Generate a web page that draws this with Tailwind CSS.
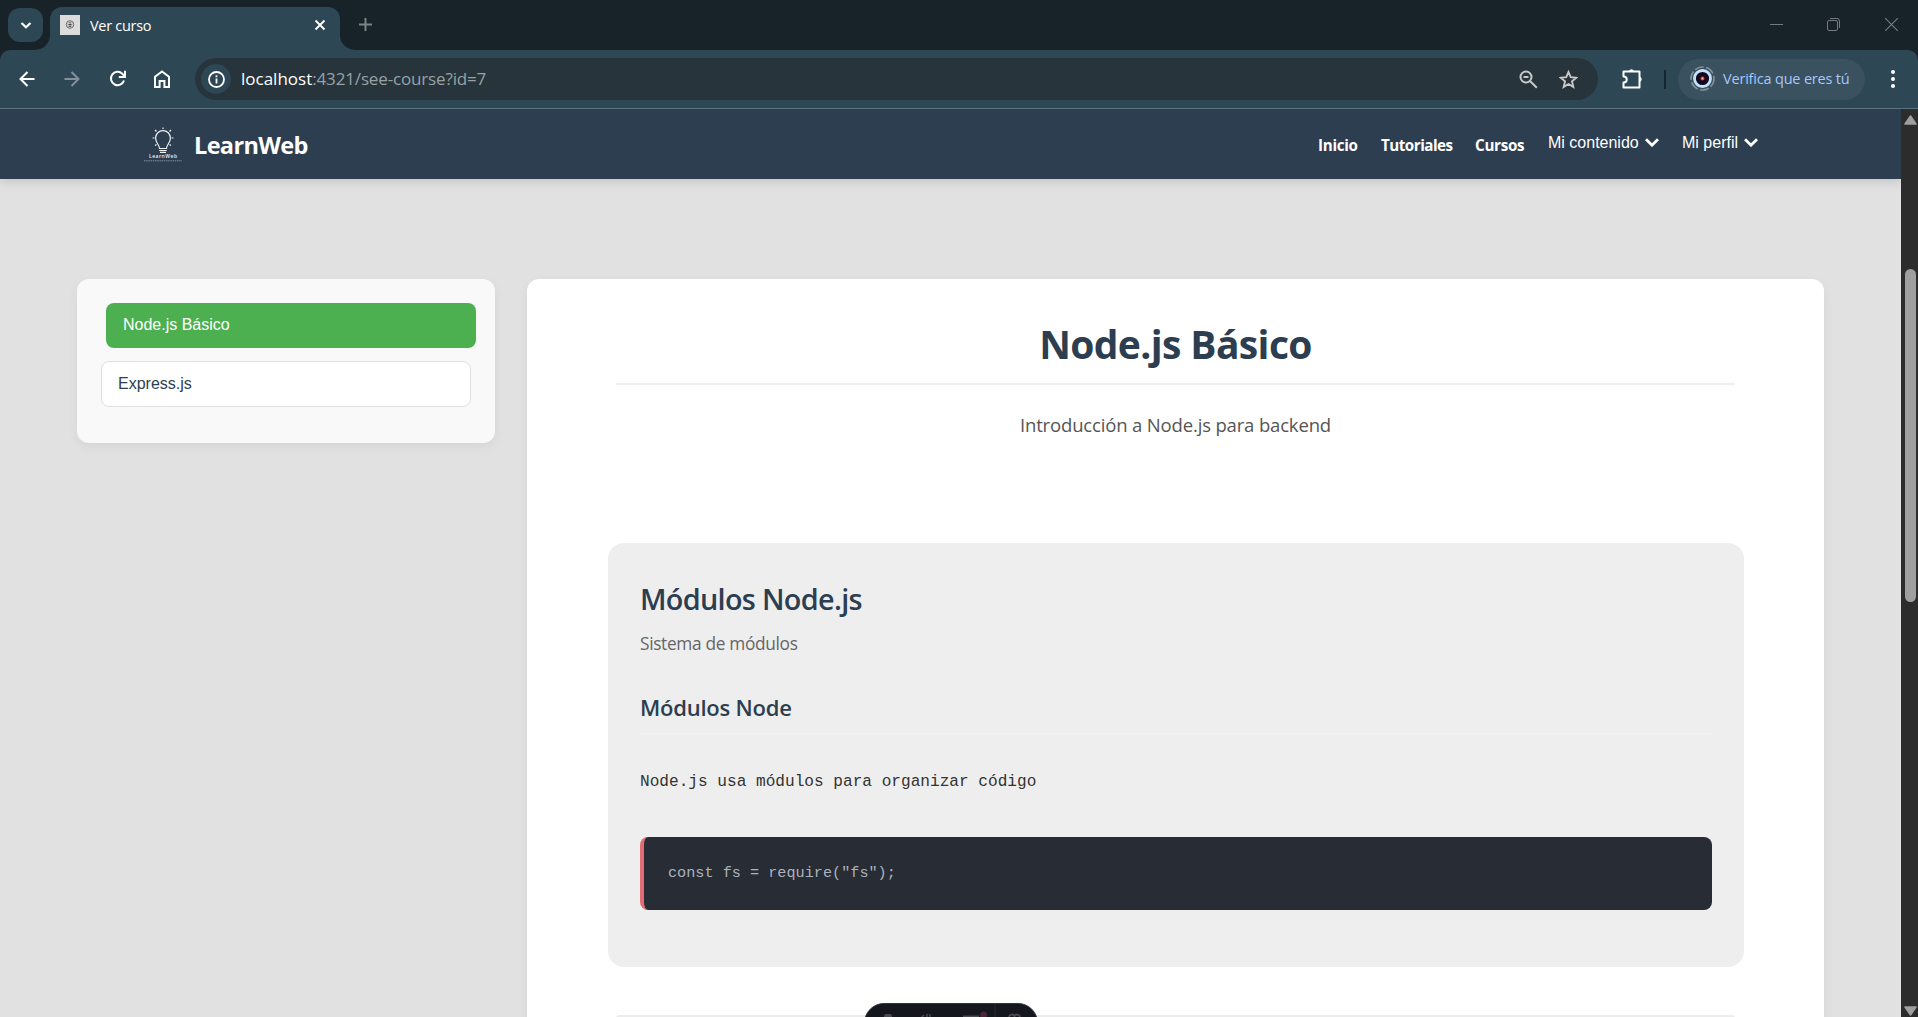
<!DOCTYPE html>
<html lang="es">
<head>
<meta charset="utf-8">
<title>Ver curso</title>
<script src="https://cdn.jsdelivr.net/npm/@tailwindcss/browser@4"></script>
</head>
<body class="flex h-[1017px] w-[1918px] flex-col overflow-hidden bg-[#172328] font-['Open_Sans',sans-serif]">

<!-- Tab strip -->
<div class="flex h-[50px] shrink-0 items-start">
  <div class="mt-2 ml-2 grid h-[34px] w-[35px] place-items-center rounded-xl bg-[#2e4754]">
    <svg class="h-3 w-3" viewBox="0 0 12 12" fill="none" stroke="#fff" stroke-width="2.2"><path d="M1.5 4 6 8.3 10.5 4"/></svg>
  </div>
  <div class="relative mt-[7px] ml-[7px] flex h-[43px] w-[290px] items-start rounded-t-xl bg-[#2e4754] pt-2 pl-[10px]">
    <svg class="absolute bottom-0 -left-[15px] h-[15px] w-[15px]" viewBox="0 0 15 15"><path d="M15 0v15H0A15 15 0 0 0 15 0z" fill="#2e4754"/></svg>
    <svg class="absolute -right-[15px] bottom-0 h-[15px] w-[15px]" viewBox="0 0 15 15"><path d="M0 0v15h15A15 15 0 0 1 0 0z" fill="#2e4754"/></svg>
    <svg class="h-5 w-5" viewBox="0 0 20 20"><path d="M0 0h20v20H0z" fill="#dcdcdc"/><circle cx="10" cy="9.5" r="3.800" fill="#c4c4c4" stroke="#777"/><path d="M8.500 9.500h3M8.800 11.300h2.400M9.500 7.700h1.200" stroke="#333" stroke-width=".9"/></svg>
    <span class="ml-[10px] w-[224px] text-[14.5px] leading-[21px] tracking-[-0.300px] text-white">Ver curso</span>
    <svg class="mt-[4px] h-3 w-3 shrink-0" viewBox="0 0 12 12" stroke="#fff" stroke-width="1.900"><path d="m1.500 1.500 9 9M10.500 1.500l-9 9"/></svg>
  </div>
  <svg class="mt-[18px] ml-[19px] h-[13px] w-[13px]" viewBox="0 0 13 13" stroke="#7d8486" stroke-width="2"><path d="M6.500 0v13M0 6.500h13"/></svg>
  <div class="mt-[18px] mr-5 ml-auto flex gap-[44px]">
    <svg class="h-[13px] w-[13px]" viewBox="0 0 13 13" stroke="#737b7e"><path d="M0 6.500h13"/></svg>
    <svg class="mr-px h-[13px] w-[13px]" viewBox="0 0 13 13" fill="none" stroke="#737b7e"><rect x=".5" y="2.500" width="10" height="10" rx="1.500"/><path d="M3 .5h7a2.500 2.500 0 0 1 2.500 2.500v7"/></svg>
    <svg class="h-[13px] w-[13px]" viewBox="0 0 13 13" stroke="#737b7e" stroke-width="1.200"><path d="m0 0 13 13M13 0 0 13"/></svg>
  </div>
</div>

<!-- Toolbar -->
<div class="flex h-[59px] shrink-0 items-center rounded-t-[10px] border-b border-[#5b7480] bg-[#2e4754]">
  <svg class="mb-px ml-[19px] h-4 w-4" viewBox="0 0 16 16" fill="none" stroke="#fff" stroke-width="2"><path d="M15.500 8H1.800M8.500 1 1.500 8l7 7"/></svg>
  <svg class="mb-px ml-[29px] h-4 w-4" viewBox="0 0 16 16" fill="none" stroke="#82919a" stroke-width="2"><path d="M.5 8h13.700M7.500 1l7 7-7 7"/></svg>
  <svg class="mb-px ml-[29px] h-[17px] w-[17px]" viewBox="0 0 17 17" fill="none" stroke="#fff" stroke-width="2"><path d="M15 10.500A6.700 6.700 0 1 1 13.300 3.700L15.500 6"/><path d="M16 .8V7H9.800"/></svg>
  <svg class="mb-px ml-[28px] h-[18px] w-4" viewBox="0 0 16 18" fill="none" stroke="#fff" stroke-width="2"><path d="M1 6.800 8 1.400l7 5.400V17h-4.600v-6H5.600v6H1z"/></svg>
  <div class="ml-[25px] flex h-[42px] w-[1403px] items-center rounded-full bg-[#27343b] pl-[6px]">
    <div class="grid h-[30px] w-[30px] place-items-center rounded-full bg-[#2e4754]">
      <svg class="h-[17px] w-[17px]" viewBox="0 0 17 17" fill="none" stroke="#fff" stroke-width="1.800"><circle cx="8.500" cy="8.500" r="7.500"/><path d="M8.500 7.500v5M8.500 4.300v2"/></svg>
    </div>
    <div class="ml-[10px] text-[17px] leading-6 text-[#97a1a6]"><span class="text-white">localhost</span><span class="tracking-[-0.150px]">:4321/see-course?id=7</span></div>
    <svg class="ml-auto h-[19px] w-[19px]" viewBox="0 0 19 19" fill="none" stroke="#c7c9ca" stroke-width="2"><circle cx="7" cy="7" r="5.500"/><path d="m11 11 6.800 6.800M4.500 7h5"/></svg>
    <svg class="mr-[20px] ml-[21px] h-[19px] w-[19px]" viewBox="0 0 19 19" fill="none" stroke="#c7c9ca" stroke-width="1.900"><path d="m9.500 2 2.200 5.200 5.600.5-4.300 3.700 1.300 5.500-4.800-2.900-4.800 2.900L6 11.400 1.700 7.700l5.600-.5z"/></svg>
  </div>
  <svg class="mb-[2px] ml-[24px] h-[21px] w-[21px]" viewBox="0 0 21 21" fill="none" stroke="#fff" stroke-width="2"><path d="M1.500 3.500h16v16h-16v-5c4.300 0 4.300-6 0-6z" stroke-linejoin="round"/><path d="M7 3a2.700 2.700 0 0 1 5 0zM18 8.800a2.700 2.700 0 0 1 0 5z" fill="#fff" stroke="none"/></svg>
  <div class="ml-[21px] h-[19px] w-[2px] bg-[#16272f]"></div>
  <div class="ml-[12px] flex h-[41px] w-[187px] items-center rounded-full bg-[#3a5160] pl-3">
    <svg class="mb-px h-[25px] w-[25px]" viewBox="0 0 25 25"><circle cx="12.500" cy="12.500" r="11.500" fill="none" stroke="#87929a" stroke-width="1.600" stroke-dasharray="9 2.500"/><circle cx="12.500" cy="12.500" r="8" fill="#11091f" stroke="#c5e3fb" stroke-width="2.800"/><circle cx="12.500" cy="12.500" r="2" fill="#e0316c"/><circle cx="12.500" cy="12.500" r=".9" fill="#ffc45e"/></svg>
    <span class="ml-[8px] text-[14.500px] whitespace-nowrap tracking-[-0.190px] text-[#a8c7fa]">Verifica que eres tú</span>
  </div>
  <svg class="mb-px ml-[26px] h-[18px] w-1" viewBox="0 0 4 18" fill="#fff"><circle cx="2" cy="2" r="2"/><circle cx="2" cy="9" r="2"/><circle cx="2" cy="16" r="2"/></svg>
</div>

<!-- Viewport -->
<div class="relative flex h-[908px] shrink-0">
  <div class="flex h-full w-[1901px] flex-col overflow-hidden bg-[#e1e1e1]">
    <header class="z-10 flex h-[70px] shrink-0 items-center bg-[#2c3e50] pl-[144px] shadow-[0_2px_10px_rgba(0,0,0,0.15)]">
      <svg class="h-[38px] w-[38px]" viewBox="0 0 38 38" fill="none" stroke="#eef1f4" stroke-width="1.200">
        <path d="M15.500 23.500c0-4-3.900-5.300-3.900-10.500a7.400 7.400 0 0 1 14.800 0c0 5.200-3.900 6.500-3.900 10.500zM15.300 25.500h7.400M16 27.300h6"/>
        <path d="M19 2.500v1.500M8.500 13h2M27.500 13h2M11 5l1.500 1.500M27 5l-1.500 1.500M11 20.500l1.500-1M27 20.500l-1.500-1"/>
        <text x="19" y="33" text-anchor="middle" font-size="5" font-weight="600" fill="#eef1f4" stroke="none" textLength="28">LearnWeb</text>
        <path d="M0 35.800h38" stroke="#9aa6b2" stroke-width=".8" stroke-dasharray="1.500 .7"/>
      </svg>
      <span class="ml-[12px] w-[1124px] pt-1 text-[23.500px] font-bold tracking-[-0.650px] text-white">LearnWeb</span>
      <nav class="flex items-center text-[15.200px] font-bold whitespace-nowrap text-white">
        <a class="w-[63px] pt-0.5 tracking-[-0.300px]">Inicio</a>
        <a class="w-[94px] pt-0.5 tracking-[-0.500px]">Tutoriales</a>
        <a class="w-[73px] pt-0.5 tracking-[-0.300px]">Cursos</a>
        <a class="flex w-[134px] items-center gap-[6px] pb-[2px] font-['Liberation_Sans',sans-serif] text-base leading-5 font-normal">Mi contenido
          <svg class="mb-px h-[9px] w-[14px]" viewBox="0 0 14 9" fill="none" stroke="#fff" stroke-width="2.800"><path d="m1 1.300 6 5.900 6-5.900"/></svg></a>
        <a class="flex items-center gap-[6px] pb-[2px] font-['Liberation_Sans',sans-serif] text-base leading-5 font-normal">Mi perfil
          <svg class="mb-px h-[9px] w-[14px]" viewBox="0 0 14 9" fill="none" stroke="#fff" stroke-width="2.800"><path d="m1 1.300 6 5.900 6-5.900"/></svg></a>
      </nav>
    </header>

    <div class="flex items-start gap-8 pt-[100px] pl-[77px]">
      <aside class="flex h-[164px] w-[418px] shrink-0 flex-col gap-[13px] rounded-xl bg-[#f9f9f9] px-6 pt-6 font-['Liberation_Sans',sans-serif] text-base leading-5 shadow-[0_4px_12px_rgba(0,0,0,0.05)]">
        <a class="ml-[5px] h-[45px] w-[370px] rounded-lg bg-[#4caf50] pt-[11.500px] pl-[17px] text-white">Node.js Básico</a>
        <a class="h-[46px] w-[370px] rounded-lg border border-[#e0e0e0] bg-white pt-[11.500px] pl-4 text-[#2c3e50]">Express.js</a>
      </aside>

      <main class="h-[900px] w-[1297px] shrink-0 rounded-xl bg-white px-[81px] pt-[41px] shadow-[0_4px_12px_rgba(0,0,0,0.05)]">
        <h1 class="mx-2 border-b-2 border-[#eeefef] pb-[15px] text-center text-[39px] leading-[48px] font-bold tracking-[-0.620px] text-[#2c3e50]">Node.js Básico</h1>
        <p class="mt-[25px] text-center text-[18.500px] leading-[30px] tracking-[-0.160px] text-[#555]">Introducción a Node.js para backend</p>
        <section class="mt-[103px] h-[424px] w-[1136px] rounded-2xl bg-[#eee] px-8 pt-9">
          <h2 class="text-[28.800px] leading-10 font-semibold tracking-[-0.680px] text-[#2c3e50]">Módulos Node.js</h2>
          <p class="mt-[11px] text-[17.300px] leading-7 tracking-[-0.320px] text-[#666]">Sistema de módulos</p>
          <h3 class="mt-[34px] border-b-2 border-[#f0f0f0] pb-[11px] text-[22px] leading-[30px] font-semibold tracking-[-0.230px] text-[#2c3e50]">Módulos Node</h3>
          <p class="mt-[33px] font-['Liberation_Mono',monospace] text-[16.130px] leading-7 text-[#333]">Node.js usa módulos para organizar código</p>
          <pre class="mt-[41px] h-[73px] rounded-lg border-l-4 border-[#e06c75] bg-[#282c34] pt-6 pl-6 font-['Liberation_Mono',monospace] text-[15.200px] leading-6 text-[#abb2bf]">const fs = require("fs");</pre>
        </section>
        <section class="mx-2 mt-12 h-20 rounded-t-[3px] border-t-2 border-[#ececec]"></section>
      </main>
    </div>
  </div>

  <!-- Scrollbar -->
  <div class="flex w-[17px] flex-col items-center bg-[#2c2c2c] pl-0.5">
    <svg class="mt-[6px] h-[10px] w-[13px]" viewBox="0 0 13 10" fill="#9f9f9f" stroke="#9f9f9f" stroke-linejoin="round" stroke-width="1.500"><path d="M6.500 1 12 9H1z"/></svg>
    <div class="mt-[144px] h-[333px] w-[11px] rounded-full bg-[#9f9f9f]"></div>
    <svg class="mt-auto mb-[1px] h-[10px] w-[13px]" viewBox="0 0 13 10" fill="#9f9f9f" stroke="#9f9f9f" stroke-linejoin="round" stroke-width="1.500"><path d="M1 1h11L6.500 9z"/></svg>
  </div>

  <!-- Dev toolbar peeking in from the bottom -->
  <div class="absolute top-[894px] left-[864px] h-[14px] w-[174px] overflow-hidden">
    <svg class="h-10 w-[174px]" viewBox="0 0 174 40" fill="none">
      <rect x=".5" y=".5" width="173" height="39" rx="19.500" fill="#15171e" stroke="#343841"/>
      <path d="M131 1v38" stroke="#2b2d35"/>
      <rect x="20" y="11" width="8" height="8" rx="2" fill="#4a4b51"/>
      <path d="M60 12l-3 3M63 11v3M66 11v3" stroke="#4a4b51" stroke-width="1.500"/>
      <path d="M99 13.500h16" stroke="#4a4b51" stroke-width="2"/>
      <circle cx="119.500" cy="12" r="3.500" fill="#4b2637"/>
      <path d="M145 14a3 3 0 0 1 5.500-1 3 3 0 0 1 5.500 1" stroke="#4a4b51" stroke-width="2"/>
    </svg>
  </div>
</div>
</body>
</html>
